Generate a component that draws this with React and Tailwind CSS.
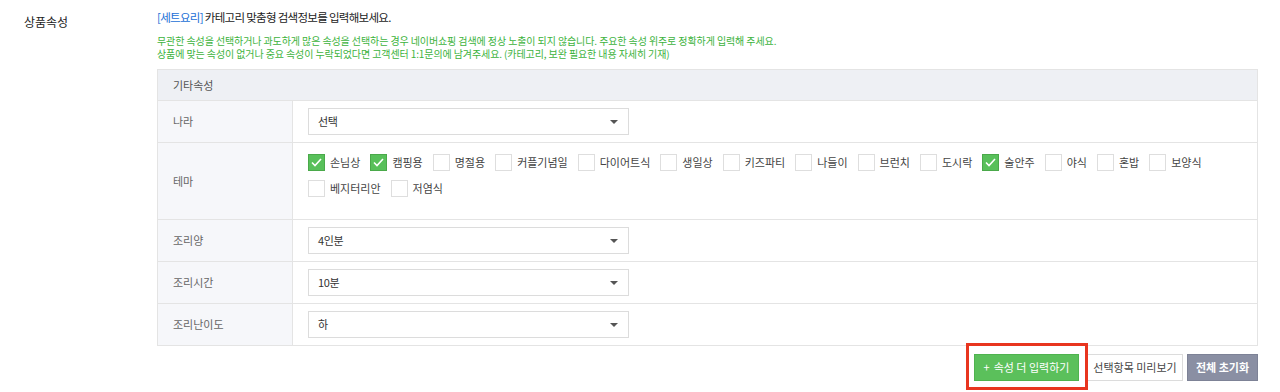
import { useState } from "react";

const FONT = { fontFamily: '"Noto Sans CJK KR", "Noto Sans", sans-serif' };

const themes = [
  { label: "손님상", checked: true },
  { label: "캠핑용", checked: true },
  { label: "명절용", checked: false },
  { label: "커플기념일", checked: false },
  { label: "다이어트식", checked: false },
  { label: "생일상", checked: false },
  { label: "키즈파티", checked: false },
  { label: "나들이", checked: false },
  { label: "브런치", checked: false },
  { label: "도시락", checked: false },
  { label: "술안주", checked: true },
  { label: "야식", checked: false },
  { label: "혼밥", checked: false },
  { label: "보양식", checked: false },
  { label: "베지터리안", checked: false },
  { label: "저염식", checked: false },
];

function SelectBox({ value }) {
  return (
    <div className="flex h-[27px] w-[321px] items-center justify-between border border-[#dcdcdc] bg-white pl-[9px] pr-[10px]">
      <span className="text-[11px] tracking-[-0.3px] text-[#333]">{value}</span>
      <svg width="8" height="4" viewBox="0 0 8 4">
        <path d="M0 0h8L4 4z" fill="#555" />
      </svg>
    </div>
  );
}

function Row({ label, children, height, last }) {
  return (
    <div
      className={"flex " + (last ? "" : "border-b border-[#e4e4e4]")}
      style={{ height }}
    >
      <div className="flex w-[135px] shrink-0 items-center border-r border-[#e4e4e4] bg-[#f6f7fa] pl-[15px] text-[11px] text-[#666]">
        {label}
      </div>
      <div className="flex flex-1 items-center pl-[15px]">{children}</div>
    </div>
  );
}

function Checkbox({ label, checked, onToggle }) {
  return (
    <label
      className="mr-[10px] flex h-[26px] cursor-pointer items-center"
      onClick={onToggle}
    >
      {checked ? (
        <span className="flex h-[17px] w-[17px] items-center justify-center border border-[#4aa94a] bg-[#58c05a]">
          <svg width="11" height="9" viewBox="0 0 11 9">
            <path d="M1 4.5L4 7.5L10 1" stroke="#fff" strokeWidth="1.6" fill="none" />
          </svg>
        </span>
      ) : (
        <span className="h-[17px] w-[17px] border border-[#dedede] bg-white" />
      )}
      <span className="ml-[5px] text-[11px] text-[#444]">{label}</span>
    </label>
  );
}

export default function App() {
  const [checks, setChecks] = useState(themes.map((t) => t.checked));

  return (
    <div className="flex h-[392px] w-[1280px] bg-white text-[#333]" style={FONT}>
      {/* left label */}
      <div className="w-[157px] shrink-0 pl-6 pt-[15px] text-[12px] leading-[14px] text-[#222]">
        상품속성
      </div>

      <div className="flex-1 pr-[22px] pt-[10px]">
        <div className="text-[11.5px] leading-[14px] tracking-[-0.7px] text-[#222]">
          <span className="text-[#1b6fd6]">[세트요리]</span> 카테고리 맞춤형 검색정보를 입력해보세요.
        </div>
        <div className="mt-[10px] text-[10px] leading-[13px] tracking-[-0.1px] text-[#3db33d]">
          <p>
            무관한 속성을 선택하거나 과도하게 많은 속성을 선택하는 경우 네이버쇼핑 검색에 정상 노출이 되지 않습니다. 주요한 속성 위주로 정확하게 입력해 주세요.
          </p>
          <p>
            상품에 맞는 속성이 없거나 중요 속성이 누락되었다면 고객센터 1:1문의에 남겨주세요. (카테고리, 보완 필요한 내용 자세히 기재)
          </p>
        </div>

        {/* table */}
        <div className="mt-[9px] border border-[#e4e4e4]">
          <div className="flex h-[31px] items-center border-b border-[#e4e4e4] bg-[#eef0f4] pl-[15px] text-[11px] text-[#555]">
            기타속성
          </div>
          <Row label="나라" height={42}>
            <SelectBox value="선택" />
          </Row>
          <Row label="테마" height={77}>
            <div className="flex flex-wrap self-start pt-[6px]">
              {themes.map((t, i) => (
                <Checkbox
                  key={t.label}
                  label={t.label}
                  checked={checks[i]}
                  onToggle={(e) => {
                    e.preventDefault();
                    setChecks((prev) => prev.map((c, j) => (j === i ? !c : c)));
                  }}
                />
              ))}
            </div>
          </Row>
          <Row label="조리양" height={42}>
            <SelectBox value="4인분" />
          </Row>
          <Row label="조리시간" height={42}>
            <SelectBox value="10분" />
          </Row>
          <Row label="조리난이도" height={41} last>
            <SelectBox value="하" />
          </Row>
        </div>

        {/* buttons */}
        <div className="mt-[8px] flex justify-end">
          <div className="relative">
            <button className="flex h-[27px] w-[105px] items-center justify-center gap-[4px] border border-[#4fb34f] bg-[#5bc05b] text-[11px] text-white">
              <span>+</span>
              <span>속성 더 입력하기</span>
            </button>
            <div className="pointer-events-none absolute -bottom-[9px] -left-[8px] -right-[9px] -top-[11px] border-[3px] border-[#e8351f]" />
          </div>
          <button className="ml-[8px] h-[27px] w-[96px] border border-[#dcdcdc] bg-white text-[11px] text-[#444]">
            선택항목 미리보기
          </button>
          <button className="ml-[4px] h-[27px] w-[71px] border border-[#7d8296] bg-[#8a8fa3] text-[11px] font-bold text-white">
            전체 초기화
          </button>
        </div>
      </div>
    </div>
  );
}
